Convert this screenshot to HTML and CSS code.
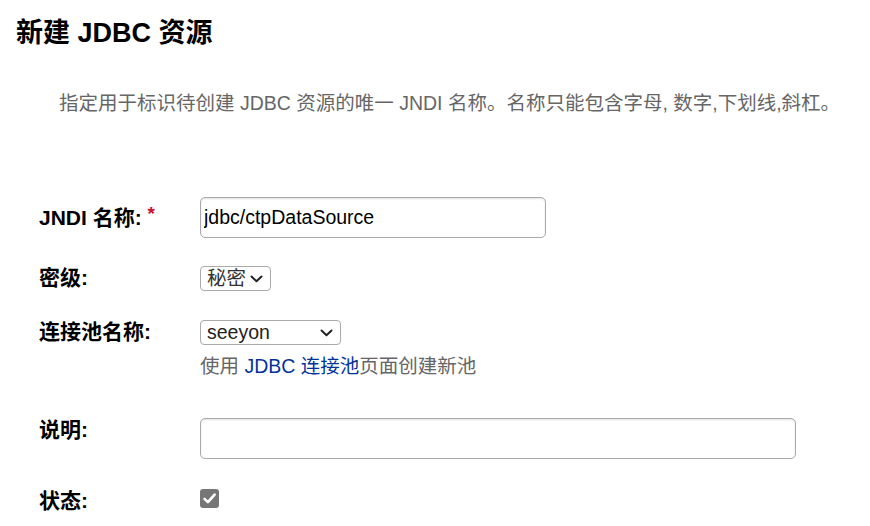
FILE: index.html
```html
<!DOCTYPE html>
<html lang="zh-CN">
<head>
<meta charset="utf-8">
<title>新建 JDBC 资源</title>
<link rel="stylesheet" href="styles.css">
</head>
<body>
<h1 class="title">新建 JDBC 资源</h1>
<p class="desc">指定用于标识待创建 JDBC 资源的唯一 JNDI 名称。名称只能包含字母, 数字,下划线,斜杠。</p>
<div class="form">
  <div class="row row-jndi">
    <label class="label label-first">JNDI 名称: <span class="req">*</span></label>
    <div class="field"><input class="text text-jndi" type="text" value="jdbc/ctpDataSource"></div>
  </div>
  <div class="row row-level">
    <label class="label">密级:</label>
    <div class="field">
      <span class="selwrap">
        <select class="sel sel-level"><option>秘密</option></select>
        <svg class="chev" width="13" height="8" viewBox="0 0 13 8"><path d="M1.5 1.5 L6.5 6.3 L11.5 1.5" fill="none" stroke="#222" stroke-width="2" stroke-linecap="round" stroke-linejoin="round"/></svg>
      </span>
    </div>
  </div>
  <div class="row row-pool">
    <label class="label">连接池名称:</label>
    <div class="field">
      <span class="selwrap">
        <select class="sel sel-pool"><option>seeyon</option></select>
        <svg class="chev" width="13" height="8" viewBox="0 0 13 8"><path d="M1.5 1.5 L6.5 6.3 L11.5 1.5" fill="none" stroke="#222" stroke-width="2" stroke-linecap="round" stroke-linejoin="round"/></svg>
      </span>
      <div class="help">使用 <a class="link" href="#">JDBC 连接池</a>页面创建新池</div>
    </div>
  </div>
  <div class="row row-desc">
    <label class="label">说明:</label>
    <div class="field"><input class="text text-desc" type="text" value=""></div>
  </div>
  <div class="row row-state">
    <label class="label">状态:</label>
    <div class="field">
      <span class="check"><svg width="19" height="19" viewBox="0 0 19 19"><path d="M4.5 9.8 L7.9 13.2 L14.6 5.6" fill="none" stroke="#fff" stroke-width="2.6" stroke-linecap="round" stroke-linejoin="round"/></svg></span>
    </div>
  </div>
</div>
</body>
</html>
```

FILE: styles.css
```css
html, body {
  margin: 0;
  padding: 0;
  background: #fff;
}
body {
  font-family: "Liberation Sans", Arial, "Noto Sans CJK SC", sans-serif;
  font-size: 19.5px;
  color: #000;
  width: 870px;
  height: 526px;
  overflow: hidden;
}
.title {
  margin: 0;
  padding: 18px 0 0 16px;
  font-size: 27px;
  line-height: 30px;
  font-weight: bold;
}
.desc {
  margin: 0;
  padding: 43px 0 0 59px;
  line-height: 24px;
  color: #666;
  font-size: 19.5px;
}
.form {
  padding: 82px 0 0 39px;
}
.row {
  display: flex;
  align-items: flex-start;
}
.label {
  width: 161px;
  flex: none;
  font-weight: bold;
  font-size: 21px;
  line-height: 24px;
}
.label-first {
  padding-top: 5px;
}
.req {
  color: #c8102e;
  font-size: 19px;
  vertical-align: 5px;
}
.field {
  display: flex;
  flex-direction: column;
  align-items: flex-start;
}
.text {
  box-sizing: border-box;
  height: 41px;
  border: 1px solid #aaa;
  border-radius: 5px;
  padding: 0 3px;
  font-family: "Liberation Sans", Arial, sans-serif;
  font-size: 19.5px;
  color: #000;
  box-shadow: inset 0 1px 2px rgba(0,0,0,0.12);
  outline: none;
}
.text-jndi { width: 346px; }
.text-desc { width: 596px; }
.selwrap {
  position: relative;
  display: block;
  height: 25px;
}
.sel {
  -webkit-appearance: none;
  appearance: none;
  display: block;
  box-sizing: border-box;
  height: 25px;
  margin: 0;
  font-family: "Liberation Sans", Arial, "Noto Sans CJK SC", sans-serif;
  font-size: 19.5px;
  line-height: 23px;
  color: #222;
  border: 1px solid #aaa;
  border-radius: 4px;
  background: #fff;
  padding: 0 20px 0 6px;
}
.chev {
  position: absolute;
  right: 8px;
  top: 9px;
  pointer-events: none;
}
.sel-level { width: 71px; color: #333; }
.sel-pool { width: 141px; }
.row-level { margin-top: 28px; }
.row-pool { margin-top: 29px; }
.row-desc { margin-top: 40px; }
.row-state { margin-top: 30px; }
.help {
  margin-top: 9px;
  line-height: 24px;
  color: #666;
}
.link {
  color: #03339a;
  text-decoration: none;
}
.check {
  display: block;
  width: 19px;
  height: 19px;
  background: #767676;
  border-radius: 3px;
}
.check svg { display: block; }
```
